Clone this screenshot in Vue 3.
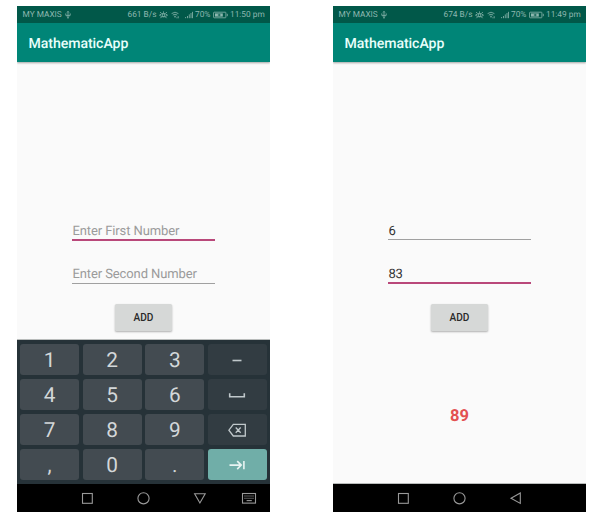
<script setup>
const phones = [
  {
    id: 'input',
    speed: '661 B/s',
    time: '11:50 pm',
    first: '',
    second: '',
    focus: 1,
    result: '',
    keyboard: true
  },
  {
    id: 'result',
    speed: '674 B/s',
    time: '11:49 pm',
    first: '6',
    second: '83',
    focus: 2,
    result: '89',
    keyboard: false
  }
]

const keys = [
  { t: '1' }, { t: '2' }, { t: '3' }, { icon: 'minus' },
  { t: '4' }, { t: '5' }, { t: '6' }, { icon: 'space' },
  { t: '7' }, { t: '8' }, { t: '9' }, { icon: 'delete' },
  { t: ',' }, { t: '0' }, { t: '.' }, { icon: 'next' }
]
</script>

<template>
  <main class="page">
    <section v-for="p in phones" :key="p.id" class="phone" :class="p.id">
      <div class="status">
        <span class="carrier">MY MAXIS</span>
        <svg class="usb" width="6" height="8" viewBox="0 0 6 8">
          <path d="M3 .3V7.7M.8 2.4V4.4H5.2V2.4M2 1.5L3 .4L4 1.5M2 5.6L3 6.6L4 5.6" />
        </svg>
        <span class="speed">{{ p.speed }}</span>
        <svg class="eye" width="9" height="8" viewBox="0 0 9 8">
          <path d="M.5 4.2Q4.5 .6 8.5 4.2Q4.5 7.6 .5 4.2M1.2 1L2.3 2.3M4.5 .4V1.8M7.8 1L6.7 2.3M1.4 7.2L2.5 6M7.6 7.2L6.5 6" />
          <circle cx="4.5" cy="4.2" r="1.3" />
        </svg>
        <svg class="wifi" width="9" height="8" viewBox="0 0 9 8">
          <path d="M.6 2.6Q4 -.2 7.4 2.6M1.8 4.1Q4 2.3 6.2 4.1M3 5.5Q4 4.7 5 5.5M4 6.4V7M7.2 5.2V7.3M5.9 6.3V7.3" />
        </svg>
        <svg class="signal" width="8" height="8" viewBox="0 0 8 8">
          <path d="M.6 6V7.2M2.5 5V7.2M4.3 3.4V7.2M6 2V7.2M7.5 .8V7.2" />
        </svg>
        <span class="percent">70%</span>
        <svg class="battery" width="15" height="8" viewBox="0 0 15 8">
          <rect x=".6" y="1.2" width="12.3" height="5.6" rx=".6" />
          <rect class="level" x="2" y="2.4" width="7.8" height="3.2" />
          <path d="M14.3 2.8V5.2" />
          <path class="bolt" d="M4.8 4H7.6M6.2 2.8V5.2" />
        </svg>
        <span class="time">{{ p.time }}</span>
      </div>

      <header class="appbar"><h1>MathematicApp</h1></header>

      <div class="content">
        <div class="field" :class="{ focused: p.focus === 1 }">
          <span v-if="p.first" class="value">{{ p.first }}</span>
          <span v-else class="hint">Enter First Number</span>
        </div>
        <div class="field second-field" :class="{ focused: p.focus === 2 }">
          <span v-if="p.second" class="value">{{ p.second }}</span>
          <span v-else class="hint">Enter Second Number</span>
        </div>
        <button class="add" type="button">ADD</button>
        <output v-if="p.result" class="sum">{{ p.result }}</output>
      </div>

      <div v-if="p.keyboard" class="keyboard">
        <div
          v-for="(k, i) in keys"
          :key="i"
          class="key"
          :class="{ fn: k.icon, accent: k.icon === 'next' }"
        >
          <span v-if="k.t">{{ k.t }}</span>
          <svg v-else width="24" height="18" viewBox="0 0 24 18">
            <path v-if="k.icon === 'minus'" d="M7.5 9.5H16.5" />
            <path v-else-if="k.icon === 'space'" d="M4.7 7.2V10.8H19.3V7.2" />
            <path v-else-if="k.icon === 'delete'" class="thin" d="M8.3 3.3H20.3V15H8.3L3.9 9.15ZM10.7 6.5L15.7 11.7M15.7 6.5L10.7 11.7" />
            <path v-else d="M4.5 9.1H16M12.2 5.1L16.2 9.1L12.2 13.1M18.9 4.9V13.3" />
          </svg>
        </div>
      </div>

      <nav class="navbar">
        <svg width="253" height="28" viewBox="0 0 253 28">
          <rect x="65.5" y="9.5" width="9.8" height="9.8" />
          <circle cx="126.5" cy="14.3" r="5.6" />
          <path v-if="p.keyboard" d="M177.6 9.7H188.2L182.9 19Z" />
          <path v-else d="M187.3 9V19.4L178 14.2Z" />
          <g v-if="p.keyboard">
            <rect x="225.5" y="9.5" width="13" height="9.6" />
            <path class="dots" d="M227.4 12H237M227.4 14.2H237" />
            <path d="M229.6 16.6H234.8" />
          </g>
        </svg>
      </nav>
    </section>
  </main>
</template>

<style>
body {
  background: #fff;
}
</style>

<style scoped>
.page {
  box-sizing: border-box;
  width: 606px;
  height: 523px;
  padding: 6px 0 0 17px;
  display: flex;
  gap: 63px;
  overflow: hidden;
  background: #fff;
  font-family: Roboto, "Liberation Sans", sans-serif;
  text-rendering: geometricPrecision;
}

.phone {
  width: 253px;
  height: 506px;
  display: flex;
  flex-direction: column;
  flex: none;
  background: #fafafa;
}

.status {
  height: 17px;
  flex: none;
  box-sizing: border-box;
  padding: 1px 5px 0 5.5px;
  display: flex;
  align-items: center;
  background: #015849;
  color: #8db7af;
  font-size: 8.3px;
  line-height: 17px;
  white-space: nowrap;
}

.status svg {
  flex: none;
  fill: none;
  stroke: #8db7af;
  stroke-width: 0.8;
}

.carrier {
  width: 40px;
}

.usb {
  margin-left: 2px;
}

.speed {
  width: 29px;
  margin-left: auto;
}

.eye {
  margin-left: 2.5px;
}

.wifi {
  margin-left: 3px;
}

.signal {
  margin-left: 5px;
}

.percent {
  width: 16px;
  margin-left: 2px;
}

.battery {
  margin-left: 1.5px;
}

.status .level {
  fill: #8db7af;
  stroke: none;
}

.status .bolt {
  stroke: #015849;
}

.time {
  width: 35px;
  margin-left: 2.5px;
}

.appbar {
  position: relative;
  height: 39px;
  flex: none;
  display: flex;
  align-items: center;
  padding-left: 11.5px;
  background: #008577;
  box-shadow: 0 1px 2px rgba(0, 0, 0, 0.35);
  clip-path: inset(0 0 -4px 0);
}

h1 {
  margin: 3px 0 0;
  color: #e9fffb;
  font-size: 14.1px;
  font-weight: 500;
  letter-spacing: -0.06px;
  line-height: 20px;
}

.content {
  flex: 1;
  display: flex;
  flex-direction: column;
  align-items: center;
  padding-top: 156px;
  border-bottom: 1px solid #b9bcbb;
}

.field {
  box-sizing: border-box;
  width: 143px;
  height: 22px;
  flex: none;
  border-bottom: 1px solid #a0a0a0;
  font-size: 13px;
  letter-spacing: -0.1px;
  line-height: 27px;
}

.second-field {
  margin-top: 21px;
  height: 23px;
}

.field.focused {
  border-bottom: 2px solid #b9487a;
  height: 23px;
}

.field.focused + .second-field {
  margin-top: 20px;
}

.hint,
.value {
  display: block;
  height: 20px;
  padding-left: 0.4px;
}

.hint {
  color: #9b9b9b;
}

.value {
  color: #333;
}

.add {
  width: 57px;
  height: 27px;
  flex: none;
  margin-top: 20px;
  padding: 0;
  border: 0;
  border-radius: 1.5px;
  background: #d6d8d7;
  box-shadow: 0 1px 2px rgba(0, 0, 0, 0.3);
  color: #292929;
  font-family: inherit;
  font-size: 10.1px;
  font-weight: 500;
  line-height: 27px;
}

.sum {
  margin-top: 76px;
  color: #e35151;
  font-size: 16.5px;
  font-weight: 700;
  line-height: 20px;
}

.keyboard {
  box-sizing: border-box;
  height: 144px;
  flex: none;
  padding: 4px 3px;
  display: grid;
  grid-template-columns: repeat(4, 59px);
  grid-template-rows: repeat(4, 31px);
  justify-content: space-between;
  align-content: space-between;
  background: #263238;
}

.key {
  display: flex;
  align-items: center;
  justify-content: center;
  border-radius: 3px;
  background: #434b51;
  color: #d3d7d9;
  font-size: 20.8px;
  line-height: 31px;
}

.key span {
  margin-top: 4px;
}

.key.fn {
  background: #323c42;
}

.key.accent {
  background: #70aea8;
}

.key svg {
  fill: none;
  stroke: #c0c8cb;
  stroke-width: 1.6;
}

.key .thin {
  stroke-width: 1.3;
}

.key.accent svg {
  stroke: #e8f4f2;
}

.navbar {
  height: 28px;
  flex: none;
  background: #000;
}

.navbar svg {
  display: block;
  fill: none;
  stroke: #999;
  stroke-width: 1.1;
}

.navbar .dots {
  stroke-dasharray: 1.2 0.8;
}
</style>
